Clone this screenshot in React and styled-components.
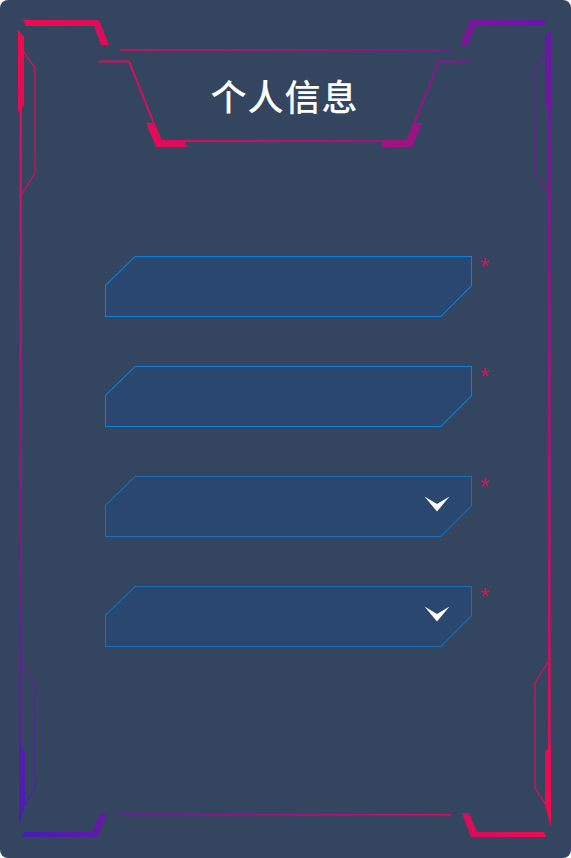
import React from 'react';
import styled, { createGlobalStyle } from 'styled-components';

const GlobalStyle = createGlobalStyle`
  html, body {
    margin: 0;
    padding: 0;
    background: #ffffff;
  }
  body {
    font-family: "Noto Sans CJK SC", "Noto Sans", sans-serif;
  }
`;

const fields = [
  { id: 'name', select: false },
  { id: 'phone', select: false },
  { id: 'gender', select: true },
  { id: 'city', select: true },
];

const App = () => {
  return (
    <>
      <GlobalStyle />
      <Panel>
        <FrameArt />
        <Title>个人信息</Title>
        <Form>
          {fields.map((f) => (
            <Row key={f.id}>
              <FieldFrame $border={f.select ? '#1b6fb8' : '#1180d9'}>
                <FieldBody>
                  <FieldInput readOnly={f.select} />
                  {f.select && <Chevron />}
                </FieldBody>
              </FieldFrame>
              <Required>*</Required>
            </Row>
          ))}
        </Form>
      </Panel>
    </>
  );
};

// decorative sci-fi border, drawn over the whole panel
const FrameArt = () => (
  <FrameSvg width="571" height="858" viewBox="0 0 571 858">
    <defs>
      <linearGradient
        id="edge"
        gradientUnits="userSpaceOnUse"
        gradientTransform="scale(571 858)"
        x1="0" y1="1" x2="1" y2="0"
      >
        <stop offset="0" stopColor="#3a1fbc" />
        <stop offset="0.5" stopColor="#f20a4c" />
        <stop offset="1" stopColor="#5a19ae" />
      </linearGradient>
    </defs>
    <g fill="url(#edge)">
      {/* corners */}
      <polygon points="23,20 99,20 109,45 101,45 94,26 26,26" />
      <polygon points="18,30 24,37 24,105 18,113" />
      <polygon points="19,745 25,751 25,805 19,827" />
      <polygon points="22,837 98,837 107,813 100,813 92,832 24,832" />
      <polygon points="546,20 470,20 460,45 468,45 475,26 543,26" />
      <polygon points="551,30 545,37 545,105 551,113" />
      <polygon points="551,745 545,752 545,805 551,827" />
      <polygon points="546,837 471,837 462,813 469,813 477,832 544,832" />
      {/* long sides */}
      <rect x="19.4" y="108" width="2.6" height="642" />
      <rect x="548" y="108" width="2.6" height="642" />
      <rect x="120" y="49.2" width="331" height="1.6" />
      <rect x="120" y="814" width="331" height="1.6" />
      {/* title plate accents */}
      <polygon points="146,123 153,123 160,140 184,140 187,147 156,147" />
      <polygon points="422,123 415,123 408,140 384,140 381,147 412,147" />
    </g>
    <g fill="none" stroke="url(#edge)">
      <polyline strokeWidth="1.2" points="21,48 35,68 35,173 22,194" />
      <polyline strokeWidth="1.2" points="21,662 35,685 35,788 25,805" />
      <polyline strokeWidth="1.2" points="549,48 535,68 535,173 549,195" />
      <polyline strokeWidth="1.2" points="548,662 535,683 535,788 546,805" />
      <polyline strokeWidth="2" points="99,61.5 129,61.5 161,141 407,141 439,61.5 469,61.5" />
    </g>
  </FrameSvg>
);

const Chevron = () => (
  <ChevronSvg width="26" height="16" viewBox="0 0 26 16">
    <polygon points="0.5,0.5 13,8 25.5,0.5 13,15.5" fill="#ffffff" />
  </ChevronSvg>
);

const Panel = styled.div`
  position: relative;
  width: 571px;
  height: 858px;
  border-radius: 8px;
  background: #34455f;
  overflow: hidden;
  display: flex;
  flex-direction: column;
  align-items: center;
`;

const FrameSvg = styled.svg`
  position: absolute;
  left: 0;
  top: 0;
  pointer-events: none;
`;

const Title = styled.h1`
  position: relative;
  margin: 76px 0 0 -2px;
  font-size: 36px;
  line-height: 38px;
  font-weight: 500;
  color: #ffffff;
  letter-spacing: 1px;
`;

const Form = styled.div`
  align-self: flex-start;
  margin: 142px 0 0 105px;
  display: flex;
  flex-direction: column;
  gap: 49px;
`;

const Row = styled.div`
  display: flex;
  align-items: flex-start;
`;

const FieldFrame = styled.div`
  box-sizing: border-box;
  width: 367px;
  height: 61px;
  padding: 1px;
  background: ${(p) => p.$border};
  clip-path: polygon(30px 0, 100% 0, 100% 30px, calc(100% - 31px) 100%, 0 100%, 0 29px);
`;

const FieldBody = styled.div`
  height: 100%;
  display: flex;
  align-items: center;
  background: #29476f;
  clip-path: polygon(29.4px 0, 100% 0, 100% 28.6px, calc(100% - 30.4px) 100%, 0 100%, 0 28.4px);
`;

const FieldInput = styled.input`
  flex: 1;
  min-width: 0;
  height: 100%;
  padding: 0 16px 0 40px;
  border: none;
  outline: none;
  background: transparent;
  color: #ffffff;
  font-family: "Noto Sans CJK SC", "Noto Sans", sans-serif;
  font-size: 18px;
`;

const ChevronSvg = styled.svg`
  flex: none;
  margin: -5px 21px 0 0;
`;

const Required = styled.span`
  margin: -1px 0 0 8px;
  font-family: "Liberation Sans", Arial, sans-serif;
  font-size: 24px;
  line-height: 24px;
  color: #cc1553;
`;

export default App;
